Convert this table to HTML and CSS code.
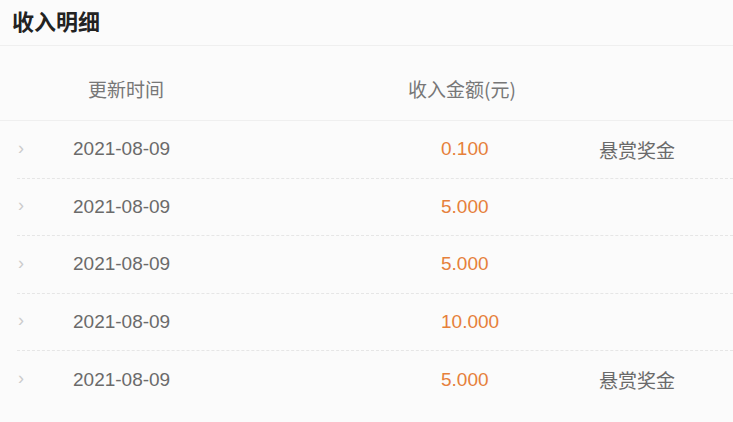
FILE: index.html
```html
<!DOCTYPE html>
<html lang="zh">
<head>
<meta charset="utf-8">
<link rel="stylesheet" href="styles.css">
</head>
<body>
<div class="page">
  <div class="title">收入明细</div>
  <div class="head">
    <div class="h-date">更新时间</div>
    <div class="h-amt">收入金额(元)</div>
  </div>
  <div class="rows">
    <div class="row">
      <span class="chev">›</span><span class="date">2021-08-09</span><span class="amt">0.100</span><span class="kind">悬赏奖金</span>
    </div>
    <div class="row">
      <span class="chev">›</span><span class="date">2021-08-09</span><span class="amt">5.000</span><span class="kind"></span>
    </div>
    <div class="row">
      <span class="chev">›</span><span class="date">2021-08-09</span><span class="amt">5.000</span><span class="kind"></span>
    </div>
    <div class="row">
      <span class="chev">›</span><span class="date">2021-08-09</span><span class="amt">10.000</span><span class="kind"></span>
    </div>
    <div class="row last">
      <span class="chev">›</span><span class="date">2021-08-09</span><span class="amt">5.000</span><span class="kind">悬赏奖金</span>
    </div>
  </div>
</div>
</body>
</html>
```

FILE: styles.css
```css
html, body {
  margin: 0;
  padding: 0;
  background: #fbfbfb;
}
.page {
  width: 733px;
  height: 422px;
  overflow: hidden;
  font-family: "Liberation Sans", Arial, "Noto Sans CJK SC", sans-serif;
  background: #fbfbfb;
}
.title {
  height: 46px;
  box-sizing: border-box;
  padding-left: 12px;
  font-size: 22px;
  font-weight: bold;
  line-height: 40px;
  color: #222;
  border-bottom: 1px solid #efefef;
  font-family: "Noto Sans CJK SC", sans-serif;
}
.head {
  height: 75px;
  display: flex;
  align-items: center;
  font-size: 19px;
  color: #777;
  border-bottom: 1px solid #efefef;
  font-family: "Noto Sans CJK SC", sans-serif;
  box-sizing: border-box;
  padding-top: 10px;
}
.h-date {
  margin-left: 88px;
  width: 320px;
}
.row {
  height: 57.5px;
  box-sizing: border-box;
  display: flex;
  align-items: center;
  font-size: 19px;
  color: #6a6a6a;
  border-bottom: 1px dashed #e6e6e6;
  margin-left: 17px;
}
.row.last {
  border-bottom: none;
}
.chev {
  width: 56px;
  color: #cccccc;
  font-size: 18px;
  margin-top: -2px;
  padding-left: 1px;
  box-sizing: border-box;
}
.date {
  width: 368px;
}
.amt {
  width: 158px;
  color: #e6803a;
}
.kind {
  font-family: "Noto Sans CJK SC", sans-serif;
  color: #6a6a6a;
}
```
